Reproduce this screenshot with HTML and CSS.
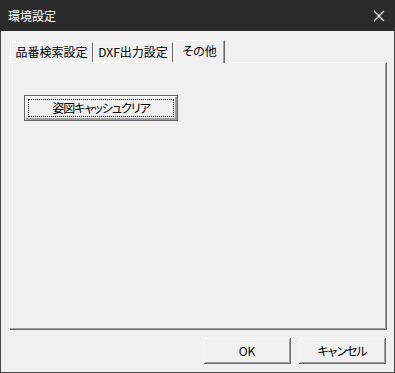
FILE: index.html
```html
<!DOCTYPE html>
<html lang="ja">
<head>
    <meta charset="UTF-8">
    <title>環境設定</title>
    <link rel="stylesheet" href="styles.css">
</head>
<body>
    <div class="window">
        <div class="titlebar">
            <span class="title">環境設定</span>
            <svg class="close" width="12" height="12" viewBox="0 0 12 12">
                <path d="M1 1 L11 11 M11 1 L1 11" stroke="#ffffff" stroke-width="1.1" fill="none"/>
            </svg>
        </div>

        <div class="client">
            <div class="tabs">
                <div class="tab tab-1">品番検索設定</div>
                <div class="tab tab-2">DXF出力設定</div>
                <div class="tab tab-active">その他</div>
            </div>

            <div class="panel">
                <button class="btn-default">
                    <span class="focus">姿図キャッシュクリア</span>
                </button>
            </div>

            <div class="footer">
                <button class="btn">OK</button>
                <button class="btn btn-kana">キャンセル</button>
            </div>
        </div>
    </div>
</body>
</html>
```

FILE: styles.css
```css
* {
    box-sizing: border-box;
}
body {
    margin: 0;
    font-family: "Noto Sans CJK JP", "Noto Sans", sans-serif;
    font-size: 12px;
    background: #f0f0f0;
}
.window {
    width: 395px;
    height: 373px;
    border: 1px solid #454545;
    border-top: none;
    background: #f0f0f0;
    display: flex;
    flex-direction: column;
}
.titlebar {
    height: 31px;
    background: #2b2b2b;
    color: #fff;
    display: flex;
    align-items: center;
    justify-content: space-between;
    padding: 0 10px 0 8px;
    margin: 0 -1px;
}
.title {
    font-size: 12px;
    line-height: 1;
}
.client {
    flex: 1;
    padding: 9px 7px 0 8px;
    display: flex;
    flex-direction: column;
}
.tabs {
    display: flex;
    align-items: flex-end;
    height: 22px;
    padding-left: 1px;
}
.tab {
    height: 20px;
    border-top: 1px solid #fff;
    border-left: 1px solid #fff;
    border-right: 1px solid #696969;
    text-align: center;
    line-height: 18px;
    color: #000;
    font-feature-settings: "palt";
    white-space: nowrap;
}
.tab-1 {
    width: 83px;
}
.tab-2 {
    width: 80px;
}
.tab-active {
    width: 51px;
    height: 23px;
    margin-left: 1px;
    margin-bottom: -1px;
    line-height: 19px;
    background: #f0f0f0;
    box-shadow: inset -1px 0 0 #a0a0a0;
    position: relative;
    z-index: 1;
}
.panel {
    height: 268px;
    border-top: 1px solid #fff;
    border-left: 1px solid #fff;
    border-right: 1px solid #696969;
    border-bottom: 1px solid #696969;
    box-shadow: inset -1px -1px 0 #a0a0a0;
    padding: 32px 0 0 14px;
}
.btn-default {
    width: 154px;
    height: 26px;
    padding: 3px;
    border: 1px solid #646464;
    background: #f0f0f0;
    box-shadow: inset 1px 1px 0 #fff, inset -2px -2px 0 #a0a0a0;
    font: inherit;
    display: flex;
}
.focus {
    flex: 1;
    border: 1px dotted #000;
    line-height: 16px;
    font-feature-settings: "palt";
    letter-spacing: -1px;
    color: #000;
}
.footer {
    display: flex;
    justify-content: flex-end;
    gap: 8px;
    margin-top: 8px;
    padding-right: 1px;
}
.btn {
    width: 87px;
    height: 26px;
    border: none;
    border-right: 1px solid #696969;
    border-bottom: 1px solid #696969;
    background: #f0f0f0;
    box-shadow: inset 1px 1px 0 #fff, inset -1px -1px 0 #a0a0a0;
    font: inherit;
    font-feature-settings: "palt";
    color: #000;
    padding: 0;
}
.btn-kana {
    letter-spacing: -1px;
}
```
